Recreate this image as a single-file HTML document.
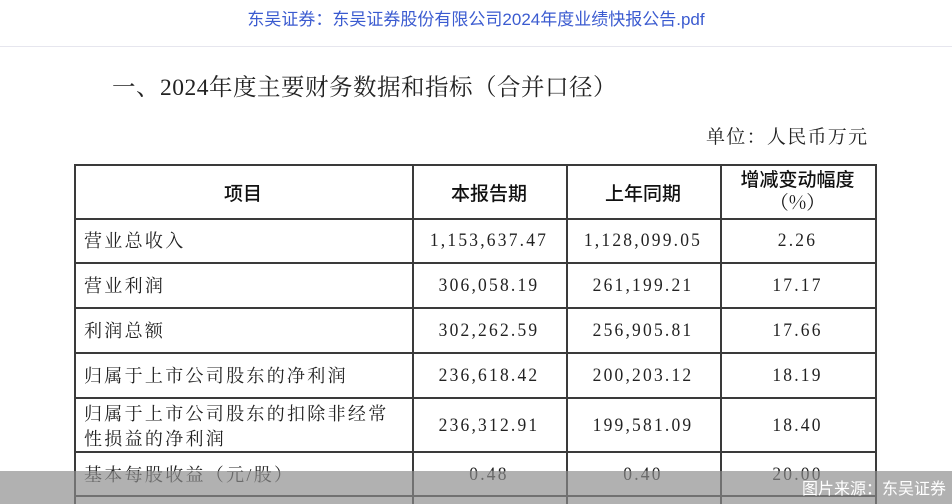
<!DOCTYPE html>
<html><head><meta charset="utf-8"><style>
body{margin:0;width:952px;height:504px;overflow:hidden;background:#fff;position:relative;font-family:"Liberation Serif","Noto Serif CJK SC",serif;color:#222}
.a{position:absolute}
.h{background:#3a3a3a;height:1.5px}
.v{background:#3a3a3a;width:1.5px}
.t{position:absolute;font-size:18px;letter-spacing:2.3px;white-space:nowrap;line-height:20px}
.n{position:absolute;font-size:19px;letter-spacing:2.4px;white-space:nowrap;text-align:center;line-height:20px;transform:scaleX(0.92)}
.hd{position:absolute;font-family:"Noto Sans CJK SC",sans-serif;font-weight:500;font-size:19px;text-align:center;line-height:23px;color:#111}
</style></head><body>
<div class="a" style="left:0;top:8px;width:952px;text-align:center;font-family:'Liberation Sans','Noto Sans CJK SC',sans-serif;font-size:17px;color:#3b5bd0;line-height:24px">东吴证券：东吴证券股份有限公司2024年度业绩快报公告.pdf</div>
<div class="a" style="left:0;top:46px;width:952px;height:1px;background:#e6e6ee"></div>
<div class="a" style="left:112px;top:74px;font-size:23.5px;letter-spacing:0.5px;line-height:28px;white-space:nowrap">一、2024年度主要财务数据和指标（合并口径）</div>
<div class="a" style="left:706px;top:126px;font-size:19px;line-height:24px;white-space:nowrap;letter-spacing:1.3px">单位：人民币万元</div>

<div class="a h" style="left:74px;top:164px;width:802px"></div>
<div class="a h" style="left:74px;top:218px;width:802px"></div>
<div class="a h" style="left:74px;top:262px;width:802px"></div>
<div class="a h" style="left:74px;top:307px;width:802px"></div>
<div class="a h" style="left:74px;top:352px;width:802px"></div>
<div class="a h" style="left:74px;top:397px;width:802px"></div>
<div class="a h" style="left:74px;top:451px;width:802px"></div>
<div class="a h" style="left:74px;top:495px;width:802px"></div>
<div class="a v" style="left:74px;top:164px;height:340px"></div>
<div class="a v" style="left:412px;top:164px;height:340px"></div>
<div class="a v" style="left:566px;top:164px;height:340px"></div>
<div class="a v" style="left:720px;top:164px;height:340px"></div>
<div class="a v" style="left:875px;top:164px;height:340px"></div>

<div class="hd" style="left:74px;width:338px;top:181px">项目</div>
<div class="hd" style="left:412px;width:154px;top:181px">本报告期</div>
<div class="hd" style="left:566px;width:154px;top:181px">上年同期</div>
<div class="hd" style="left:720px;width:155px;top:167px">增减变动幅度<br><span style="font-family:'Noto Serif CJK SC',serif;font-weight:400">（%）</span></div>

<div class="t" style="left:84px;top:231px">营业总收入</div>
<div class="t" style="left:84px;top:276px">营业利润</div>
<div class="t" style="left:84px;top:321px">利润总额</div>
<div class="t" style="left:84px;top:366px">归属于上市公司股东的净利润</div>
<div class="t" style="left:84px;top:404px">归属于上市公司股东的扣除非经常</div>
<div class="t" style="left:84px;top:429px">性损益的净利润</div>
<div class="t" style="left:84px;top:465px">基本每股收益（元/股）</div>

<div class="n" style="left:412px;width:154px;top:231px">1,153,637.47</div>
<div class="n" style="left:566px;width:154px;top:231px">1,128,099.05</div>
<div class="n" style="left:720px;width:155px;top:231px">2.26</div>
<div class="n" style="left:412px;width:154px;top:276px">306,058.19</div>
<div class="n" style="left:566px;width:154px;top:276px">261,199.21</div>
<div class="n" style="left:720px;width:155px;top:276px">17.17</div>
<div class="n" style="left:412px;width:154px;top:321px">302,262.59</div>
<div class="n" style="left:566px;width:154px;top:321px">256,905.81</div>
<div class="n" style="left:720px;width:155px;top:321px">17.66</div>
<div class="n" style="left:412px;width:154px;top:366px">236,618.42</div>
<div class="n" style="left:566px;width:154px;top:366px">200,203.12</div>
<div class="n" style="left:720px;width:155px;top:366px">18.19</div>
<div class="n" style="left:412px;width:154px;top:416px">236,312.91</div>
<div class="n" style="left:566px;width:154px;top:416px">199,581.09</div>
<div class="n" style="left:720px;width:155px;top:416px">18.40</div>
<div class="n" style="left:412px;width:154px;top:465px">0.48</div>
<div class="n" style="left:566px;width:154px;top:465px">0.40</div>
<div class="n" style="left:720px;width:155px;top:465px">20.00</div>

<div class="a" style="left:0;top:471px;width:952px;height:33px;background:rgba(140,140,140,0.68)"></div>
<div class="a" style="right:6px;top:476px;font-family:'Noto Sans CJK SC',sans-serif;font-size:16px;color:#fff;line-height:22px">图片来源：东吴证券</div>
</body></html>
